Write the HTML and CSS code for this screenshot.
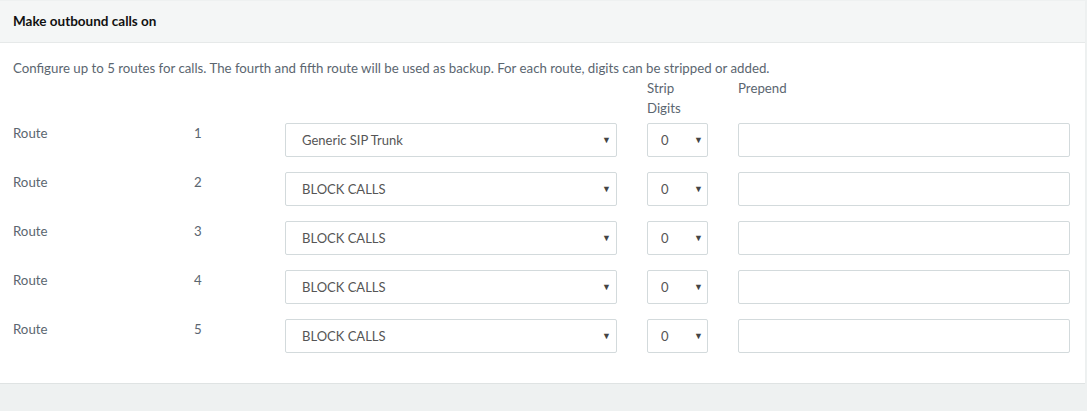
FILE: index.html
```html
<!DOCTYPE html>
<html lang="en">
<head>
    <meta charset="UTF-8">
    <meta name="viewport" content="width=device-width, initial-scale=1.0">
    <title>Outbound routes</title>

    <link rel="stylesheet" href="styles.css">
</head>
<body>
    <div class="panel">
        <div class="panel-heading">Make outbound calls on</div>
        <div class="panel-body">
            <p class="intro">Configure up to 5 routes for calls. The fourth and fifth route will be used as backup. For each route, digits can be stripped or added.</p>

            <div class="routes">
                <div class="head"></div>
                <div class="head"></div>
                <div class="head"></div>
                <div class="head">Strip<br>Digits</div>
                <div class="head">Prepend</div>

                <div class="cell">Route</div>
                <div class="cell">1</div>
                <div class="select-wrap">
                    <select class="trunk">
                        <option>Generic SIP Trunk</option>
                        <option>BLOCK CALLS</option>
                    </select>
                </div>
                <div class="select-wrap small">
                    <select class="strip"><option>0</option><option>1</option><option>2</option></select>
                </div>
                <input type="text" class="prepend">

                <div class="cell">Route</div>
                <div class="cell">2</div>
                <div class="select-wrap">
                    <select class="trunk">
                        <option>BLOCK CALLS</option>
                        <option>Generic SIP Trunk</option>
                    </select>
                </div>
                <div class="select-wrap small">
                    <select class="strip"><option>0</option><option>1</option><option>2</option></select>
                </div>
                <input type="text" class="prepend">

                <div class="cell">Route</div>
                <div class="cell">3</div>
                <div class="select-wrap">
                    <select class="trunk">
                        <option>BLOCK CALLS</option>
                        <option>Generic SIP Trunk</option>
                    </select>
                </div>
                <div class="select-wrap small">
                    <select class="strip"><option>0</option><option>1</option><option>2</option></select>
                </div>
                <input type="text" class="prepend">

                <div class="cell">Route</div>
                <div class="cell">4</div>
                <div class="select-wrap">
                    <select class="trunk">
                        <option>BLOCK CALLS</option>
                        <option>Generic SIP Trunk</option>
                    </select>
                </div>
                <div class="select-wrap small">
                    <select class="strip"><option>0</option><option>1</option><option>2</option></select>
                </div>
                <input type="text" class="prepend">

                <div class="cell">Route</div>
                <div class="cell">5</div>
                <div class="select-wrap">
                    <select class="trunk">
                        <option>BLOCK CALLS</option>
                        <option>Generic SIP Trunk</option>
                    </select>
                </div>
                <div class="select-wrap small">
                    <select class="strip"><option>0</option><option>1</option><option>2</option></select>
                </div>
                <input type="text" class="prepend">
            </div>
        </div>
    </div>
</body>
</html>
```

FILE: styles.css
```css
body {
    font-family: Lato, 'Liberation Sans', sans-serif;
    font-size: 13.25px;
    line-height: 20px;
    color: #5b6670;
    background-color: #eef1f1;
    margin: 0;
    padding: 1px 2px 0 0;
}

.panel {
    background-color: #fff;
    border-bottom: 1px solid #dfe3e3;
    box-shadow: 0 1px 1px rgba(0, 0, 0, 0.04);
}

.panel-heading {
    background-color: #f4f6f6;
    border-bottom: 1px solid #e6e9e9;
    color: #111;
    font-size: 13.5px;
    font-weight: bold;
    height: 41px;
    line-height: 41px;
    padding: 0 13px;
}

.panel-body {
    padding: 15px 15px 30px 13px;
}

.intro {
    margin: 0;
}

.routes {
    display: grid;
    grid-template-columns: 151px 61px 332px 61px 332px;
    column-gap: 30px;
    row-gap: 15px;
    align-items: start;
}

.head {
    margin-bottom: -10px;
}

.select-wrap {
    position: relative;
}

.select-wrap::after {
    content: "\25BC";
    position: absolute;
    right: 6px;
    top: 0;
    line-height: 33px;
    font-size: 9px;
    color: #444;
    pointer-events: none;
}

.small::after {
    right: 5px;
}

select, .prepend {
    display: block;
    width: 100%;
    height: 34px;
    box-sizing: border-box;
    border: 1px solid #d3dadc;
    border-radius: 2px;
    background-color: #fff;
    font-family: inherit;
    font-size: 13px;
    color: #555;
    margin: 0;
}

select {
    appearance: none;
    -webkit-appearance: none;
    padding: 0 24px 0 16px;
    cursor: pointer;
}

.small select {
    padding-left: 13px;
}
```
